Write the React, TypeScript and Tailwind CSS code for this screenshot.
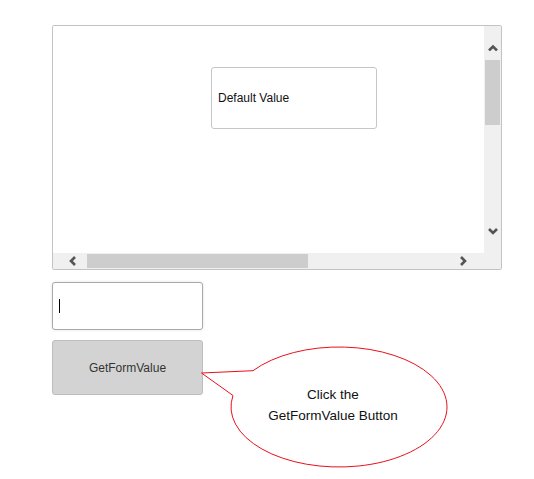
import React from "react";

const Chevron = ({ dir }: { dir: "up" | "down" | "left" | "right" }) => {
  const d =
    dir === "up"
      ? "M1 6.5 L5 2.5 L9 6.5"
      : dir === "down"
      ? "M1 1 L5 5 L9 1"
      : dir === "left"
      ? "M6 1 L2 5 L6 9"
      : "M1 1 L5 5 L1 9";
  const vert = dir === "up" || dir === "down";
  return (
    <svg
      width={vert ? 10 : 7}
      height={vert ? 7 : 10}
      viewBox={vert ? "0 0 10 7" : "0 0 7 10"}
      className="block"
    >
      <path d={d} fill="none" stroke="#555555" strokeWidth={2.6} strokeLinecap="butt" strokeLinejoin="miter" />
    </svg>
  );
};

export default function App() {
  return (
    <div
      className="relative w-[534px] h-[479px] bg-white pl-[52px] pt-[25px] flex flex-col"
      style={{ fontFamily: '"Liberation Sans", Arial, sans-serif' }}
    >
      {/* Scroll viewer */}
      <div className="w-[450px] h-[245px] border border-[#c3c3c3] rounded-[2px] grid grid-cols-[1fr_17px] grid-rows-[1fr_16px] overflow-hidden">
        <div className="bg-white pt-[41px] pl-[158px]">
          <div className="w-[166px] h-[62px] border border-[#c6c6c6] rounded-[3px] flex items-center pl-[6px] text-[12px] text-[#111]">
            Default Value
          </div>
        </div>
        {/* vertical scrollbar */}
        <div className="bg-[#f0f0f0] flex flex-col">
          <div className="h-[34px] flex items-end justify-center pb-[9px]">
            <Chevron dir="up" />
          </div>
          <div className="h-[65px] mx-[1px] bg-[#cdcdcd]" />
          <div className="flex-1" />
          <div className="h-[34px] flex items-start justify-center pt-[9px]">
            <Chevron dir="down" />
          </div>
        </div>
        {/* horizontal scrollbar */}
        <div className="bg-[#f0f0f0] flex items-center">
          <div className="w-[34px] h-full flex items-center justify-center pl-[4px]">
            <Chevron dir="left" />
          </div>
          <div className="w-[221px] h-[14px] bg-[#cdcdcd]" />
          <div className="flex-1" />
          <div className="w-[34px] h-full flex items-center justify-center pr-[8px]">
            <Chevron dir="right" />
          </div>
        </div>
        <div className="bg-[#f0f0f0]" />
      </div>

      {/* Text input */}
      <div className="mt-[12px] w-[151px] h-[48px] border border-[#a9a9a9] rounded-[3px] bg-white shadow-[0_0_3px_rgba(0,0,0,0.12)] flex items-center pl-[6px]">
        <div className="w-[1px] h-[14px] bg-black" />
      </div>

      {/* Button */}
      <div className="mt-[10px] w-[151px] h-[55px] border border-[#bdbdbd] rounded-[3px] bg-[#d3d3d3] flex items-center justify-center text-[12px] text-[#333]">
        GetFormValue
      </div>

      {/* Callout */}
      <svg className="absolute left-0 top-0 pointer-events-none" width={534} height={479}>
        <path
          d="M 253 370.7 L 201.5 373 L 233 395.5 A 108 60 0 1 0 253 370.7 Z"
          fill="white"
          stroke="#e8101a"
          strokeWidth={1}
        />
      </svg>
      <div className="absolute left-[233px] top-[384px] w-[200px] text-center text-[13.5px] leading-[21px] text-[#111]">
        <div>Click the</div>
        <div>GetFormValue Button</div>
      </div>
    </div>
  );
}
